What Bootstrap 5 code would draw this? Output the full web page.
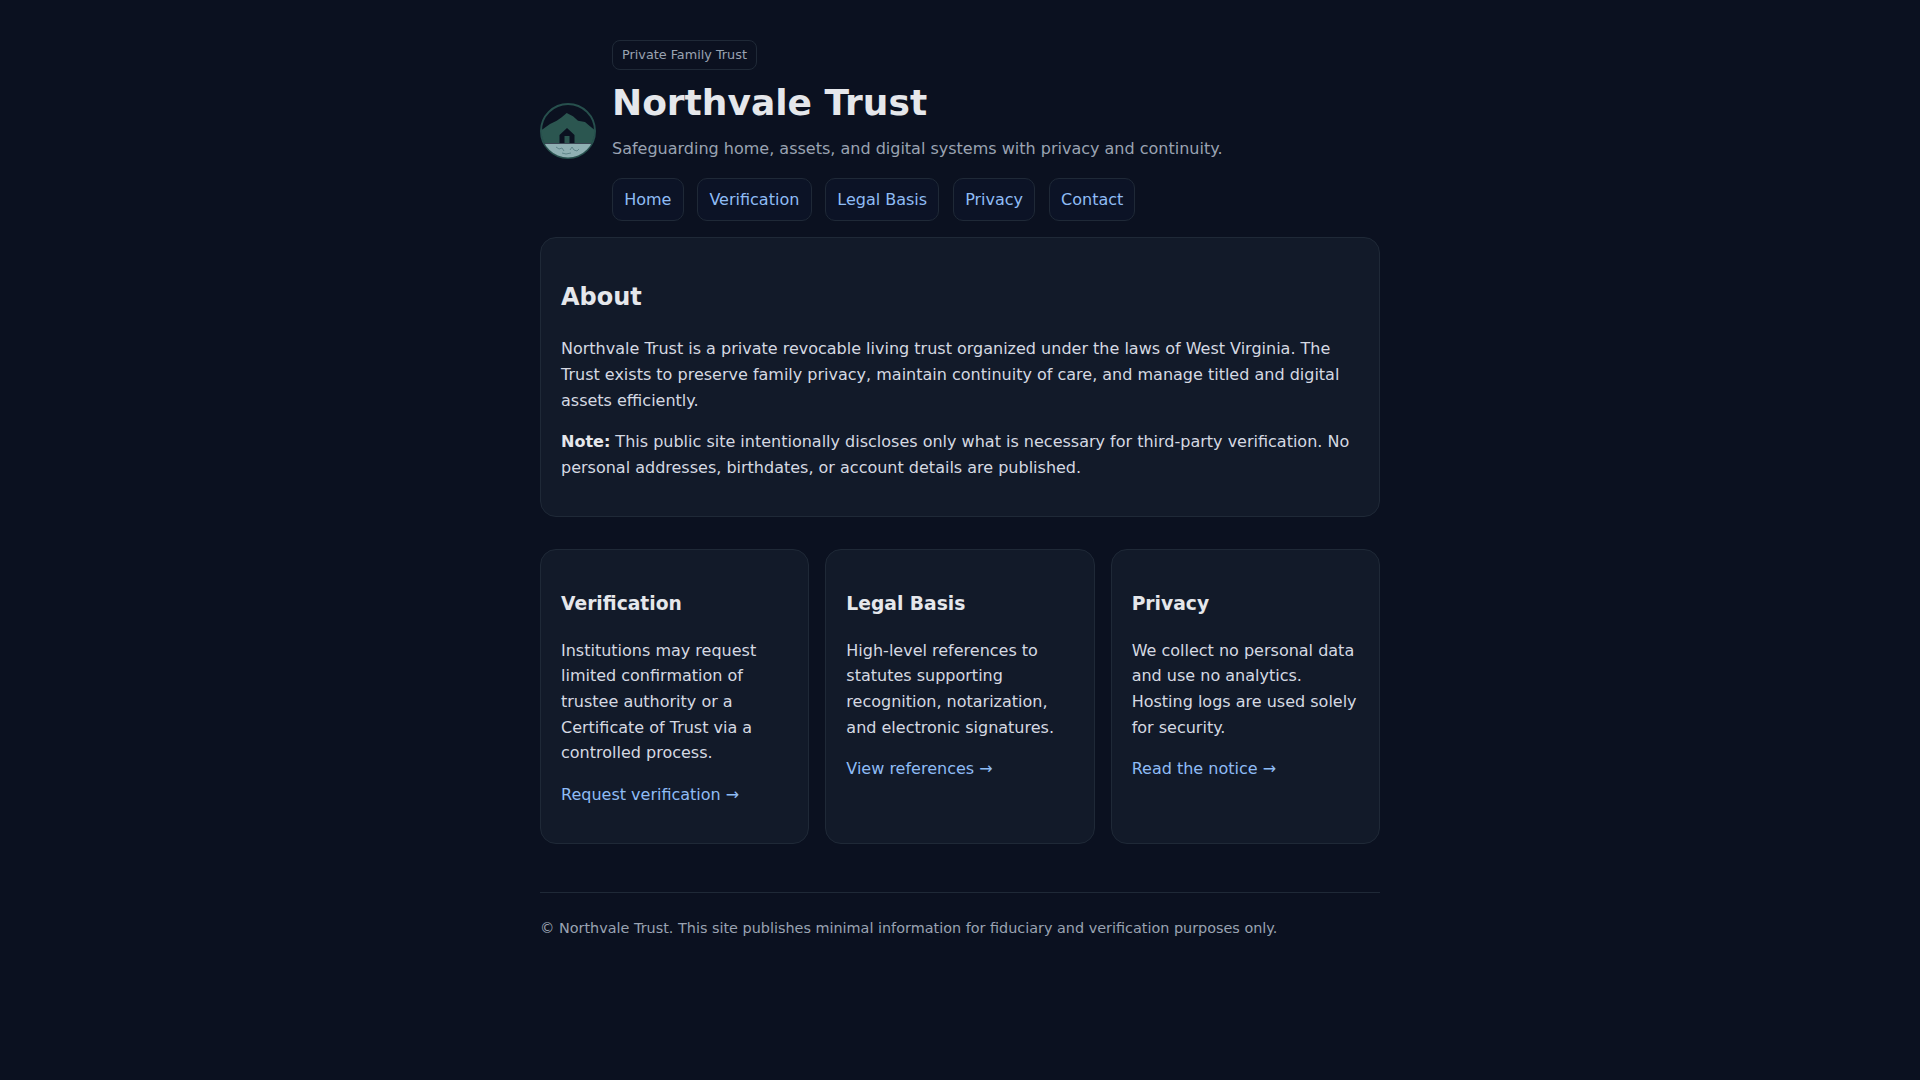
<!doctype html>
<html lang="en">
<head>
<meta charset="utf-8">
<title>Northvale Trust</title>
<link href="https://cdn.jsdelivr.net/npm/bootstrap@5.3.0/dist/css/bootstrap.min.css" rel="stylesheet">
<style>
html,body{height:100%}
body{background:#0b1120;color:#e5e7eb;font-family:"DejaVu Sans",sans-serif;font-size:16px;line-height:1.6}
.shell{width:840px;margin:0 auto;padding-top:40px}
.brand-logo{width:56px;height:56px;flex:none}
.tag{display:inline-block;font-size:12.8px;line-height:20px;color:#9aa3b2;border:1px solid #1f2937;border-radius:8px;padding:4px 9px}
.site-title{font-size:36px;font-weight:700;line-height:1.2;margin:11px 0 12px;color:#e5e7eb}
.site-sub{color:#9aa3b2;margin:0 0 16px;line-height:25.6px}
.nav-row{gap:13.6px}
.pill{display:block;color:#8fbcf5;background:#0c1326;border:1px solid #1f2937;border-radius:10px;padding:8px 11.2px;line-height:25.6px;text-decoration:none}
.panel{background:#121a29;border:1px solid #1f2937;border-radius:16px;padding:20px;color:#d5d9e2}
.about{margin-top:16px}
.panel h2{font-size:24px;font-weight:700;line-height:1.6;margin:19.92px 0 19.7px;color:#e5e7eb}
.panel h3{font-size:18.72px;font-weight:700;line-height:1.6;margin:18.72px 0 18.9px;color:#e5e7eb}
.panel p{margin:0 0 16px;line-height:25.6px}
.panel strong{color:#e5e7eb}
.panel a{color:#8fbcf5;text-decoration:none}
.trio{display:grid;grid-template-columns:repeat(3,1fr);gap:16px;margin-top:32px}
.site-foot{border-top:1px solid #1f2937;margin-top:48px;padding-top:24px;color:#9aa3b2;font-size:14.4px;line-height:23px}
</style>
</head>
<body>
<div class="shell">
  <header class="d-flex align-items-center gap-3">
    <svg class="brand-logo" viewBox="0 0 56 56" aria-label="Northvale Trust logo">
      <defs><clipPath id="disc"><circle cx="28" cy="28" r="26.5"/></clipPath></defs>
      <circle cx="28" cy="28" r="27" fill="#0b1120" stroke="#27504d" stroke-width="2"/>
      <g clip-path="url(#disc)">
        <path d="M0 28 L3 26 L10 21 L16.7 17.7 L21.7 14.3 L26.7 10 L33 13.3 L38 17.7 L45 19 L50 23.3 L56 28 V44 H0Z" fill="#2b5650"/>
        <path d="M0 41 H56 V56 H0Z" fill="#8fb0b3"/>
        <path d="M0 40.5 H56" stroke="#3a4653" stroke-width="1.2"/>
        <path d="M16 44 l3 2 l3 -1 l2 3 M30 47 l2 -3 l2 3 l3 1 l2 -2 M22 50 l4 1 l5 -1" stroke="#5f8589" stroke-width="1" fill="none"/>
      </g>
      <path d="M19.5 40 V32 L27 25 L34.5 32 V40 H29.5 V33 H24.5 V40Z" fill="#0b1120"/>
    </svg>
    <div>
      <span class="tag">Private Family Trust</span>
      <h1 class="site-title">Northvale Trust</h1>
      <p class="site-sub">Safeguarding home, assets, and digital systems with privacy and continuity.</p>
      <nav class="d-flex nav-row">
        <a class="pill" href="#">Home</a>
        <a class="pill" href="#">Verification</a>
        <a class="pill" href="#">Legal Basis</a>
        <a class="pill" href="#">Privacy</a>
        <a class="pill" href="#">Contact</a>
      </nav>
    </div>
  </header>
  <main>
    <section class="panel about">
      <h2>About</h2>
      <p>Northvale Trust is a private revocable living trust organized under the laws of West Virginia. The Trust exists to preserve family privacy, maintain continuity of care, and manage titled and digital assets efficiently.</p>
      <p><strong>Note:</strong> This public site intentionally discloses only what is necessary for third-party verification. No personal addresses, birthdates, or account details are published.</p>
    </section>
    <section class="trio">
      <article class="panel">
        <h3>Verification</h3>
        <p>Institutions may request limited confirmation of trustee authority or a Certificate of Trust via a controlled process.</p>
        <p><a href="#">Request verification →</a></p>
      </article>
      <article class="panel">
        <h3>Legal Basis</h3>
        <p>High-level references to statutes supporting recognition, notarization, and electronic signatures.</p>
        <p><a href="#">View references →</a></p>
      </article>
      <article class="panel">
        <h3>Privacy</h3>
        <p>We collect no personal data and use no analytics. Hosting logs are used solely for security.</p>
        <p><a href="#">Read the notice →</a></p>
      </article>
    </section>
  </main>
  <footer class="site-foot">© Northvale Trust. This site publishes minimal information for fiduciary and verification purposes only.</footer>
</div>
</body>
</html>
